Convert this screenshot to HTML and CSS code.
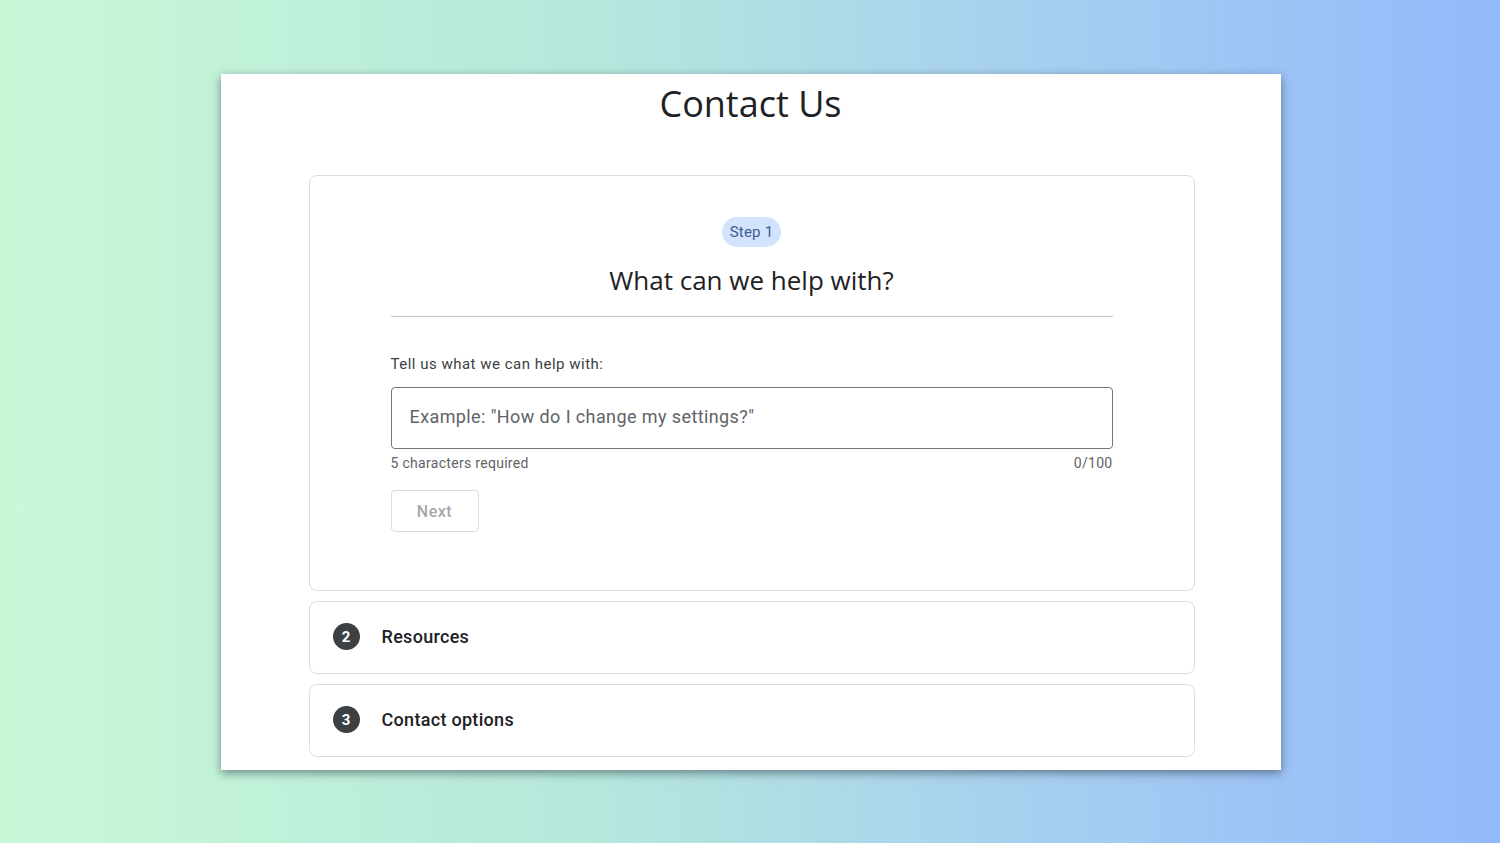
FILE: index.html
```html
<!DOCTYPE html>
<html lang="en">

<head>
    <meta charset="UTF-8">
    <meta name="viewport" content="width=device-width, initial-scale=1.0">
    <title>Contact Us</title>

    <link rel="stylesheet" href="styles.css">
</head>

<body>
    <main class="panel">
        <h1 class="title">Contact Us</h1>

        <section class="card step-open">
            <span class="chip">Step 1</span>
            <h2 class="subtitle">What can we help with?</h2>
            <hr class="divider">

            <form class="form">
                <label for="inputQuestion" class="label">Tell us what we can help with:</label>
                <div class="input-container">
                    <input id="inputQuestion" type="text" maxlength="100"
                        placeholder='Example: "How do I change my settings?"'>
                </div>
                <div class="helper">
                    <span>5 characters required</span>
                    <span id="counter">0/100</span>
                </div>

                <div class="action">
                    <button id="btnNext" type="button" disabled>Next</button>
                </div>
            </form>
        </section>

        <section class="card step-closed">
            <span class="number">2</span>
            <span class="step-name">Resources</span>
        </section>

        <section class="card step-closed">
            <span class="number">3</span>
            <span class="step-name">Contact options</span>
        </section>
    </main>

    <script>
        const inputQuestion = document.getElementById('inputQuestion');
        const counter = document.getElementById('counter');
        const btnNext = document.getElementById('btnNext');

        inputQuestion.addEventListener('input', () => {
            const size = inputQuestion.value.length;
            counter.innerText = `${size}/100`;
            btnNext.disabled = size < 5;
        });
    </script>
</body>

</html>
```

FILE: styles.css
```css
:root {
    --text: #202124;
    --text-soft: #3c4043;
    --muted: #5f6368;
    --border: #dadce0;
    --chip: #d3e3fd;
    --chip-text: #3e5d96;
}

* {
    margin: 0;
    padding: 0;
    box-sizing: border-box;
    font-family: Roboto, "Liberation Sans", sans-serif;
}

body {
    min-height: 100vh;
    background: linear-gradient(90deg, #c8f9d7 0%, #b6e7dc 40%, #a9d2ee 65%, #94b9fb 100%);
    display: flex;
    justify-content: center;
    align-items: flex-start;
}

.panel {
    width: 1060px;
    margin-top: 74px;
    margin-left: 1px;
    padding: 8px 0 13px;
    background-color: white;
    box-shadow: 0 3px 9px rgba(40, 50, 60, 0.55);
    display: flex;
    flex-direction: column;
    align-items: center;
}

.title,
.subtitle {
    font-family: "Open Sans", sans-serif;
    font-weight: 400;
    color: var(--text);
}

.title {
    font-size: 36px;
    line-height: 43px;
    margin-bottom: 50px;
}

.card {
    width: 886px;
    margin-left: 2px;
    border: 1px solid var(--border);
    border-radius: 8px;
    background-color: white;
}

.step-open {
    display: flex;
    flex-direction: column;
    align-items: center;
    padding: 41px 81px 58px;
}

.chip {
    background-color: var(--chip);
    color: var(--chip-text);
    font-size: 15px;
    letter-spacing: 0.2px;
    line-height: 30px;
    padding: 0 8px;
    border-radius: 15px;
}

.subtitle {
    font-size: 26px;
    line-height: 32px;
    margin-top: 17px;
}

.divider {
    width: 100%;
    border: 0;
    border-top: 1px solid #c4c7c5;
    margin-top: 20px;
}

.form {
    width: 100%;
    display: flex;
    flex-direction: column;
    margin-top: 37px;
}

.label {
    font-size: 15px;
    letter-spacing: 0.5px;
    line-height: 20px;
    color: var(--text-soft);
}

.input-container {
    margin-top: 13px;
    height: 62px;
    border: 1px solid #747775;
    border-radius: 4px;
    display: flex;
    align-items: center;
    padding: 0 18px 3px;
}

input {
    width: 100%;
    border: 0;
    outline: 0;
    font-size: 18px;
    letter-spacing: 0.4px;
    color: var(--text);
    background: transparent;
}

input::placeholder {
    color: var(--muted);
}

.helper {
    display: flex;
    justify-content: space-between;
    margin-top: 6px;
    font-size: 14px;
    letter-spacing: 0.3px;
    line-height: 16px;
    color: var(--muted);
}

.action {
    display: flex;
    margin-top: 19px;
}

button {
    width: 88px;
    height: 42px;
    background-color: white;
    border: 1px solid var(--border);
    border-radius: 4px;
    color: #a8a8a8;
    font-size: 16px;
    letter-spacing: 0.5px;
    font-weight: 500;
}

button:not(:disabled) {
    color: #0b57d0;
    cursor: pointer;
}

.step-closed {
    display: flex;
    align-items: center;
    height: 73px;
    padding: 0 23px 2px;
    margin-top: 10px;
}

.number {
    width: 27px;
    height: 27px;
    border-radius: 50%;
    background-color: var(--text-soft);
    color: white;
    font-size: 15px;
    font-weight: 700;
    display: flex;
    justify-content: center;
    align-items: center;
}

.step-name {
    margin-left: 22px;
    font-size: 18px;
    font-weight: 500;
    letter-spacing: 0.3px;
    color: var(--text);
}
```
